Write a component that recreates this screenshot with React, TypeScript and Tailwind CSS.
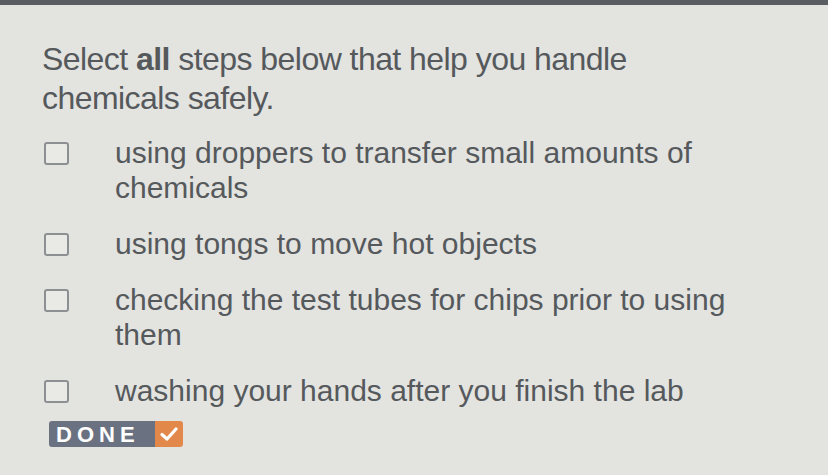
const options = [
  'using droppers to transfer small amounts of chemicals',
  'using tongs to move hot objects',
  'checking the test tubes for chips prior to using them',
  'washing your hands after you finish the lab',
]

export default function App() {
  return (
    <div
      className="w-[828px] h-[475px] overflow-hidden bg-[#e3e3e0] text-[#55595c]"
      style={{ fontFamily: '"Liberation Sans", Arial, sans-serif' }}
    >
      <div className="h-[5px] bg-[#5a5d62]" />
      <div className="pl-[42px] pt-[35px]">
        <p className="w-[640px] text-[32px] leading-[39px] tracking-[-0.55px]">
          Select <span className="font-bold">all</span> steps below that help you handle chemicals safely.
        </p>

        <ul className="mt-[17px] flex flex-col gap-[21px]">
          {options.map((text) => (
            <li key={text} className="flex items-start">
              <span className="mt-[7px] ml-[2px] w-[25px] h-[23px] shrink-0 rounded-[3px] border-2 border-[#8d9092] bg-[#e9e9e6]" />
              <span className="ml-[46px] w-[620px] text-[30px] leading-[35px]">{text}</span>
            </li>
          ))}
        </ul>

        <button className="mt-[13px] ml-[7px] flex h-[26px] items-stretch overflow-hidden rounded-[3px]">
          <span className="flex w-[106px] items-center bg-[#6a7282] pl-[7px] text-[22px] font-bold tracking-[5px] text-white">
            DONE
          </span>
          <span className="flex w-[28px] items-center justify-center bg-[#e2884a]">
            <svg width="18" height="16" viewBox="0 0 18 16" fill="none">
              <path d="M2 8.5 L7 13 L16 3" stroke="white" strokeWidth="3.2" strokeLinecap="round" strokeLinejoin="round" />
            </svg>
          </span>
        </button>
      </div>
    </div>
  )
}
